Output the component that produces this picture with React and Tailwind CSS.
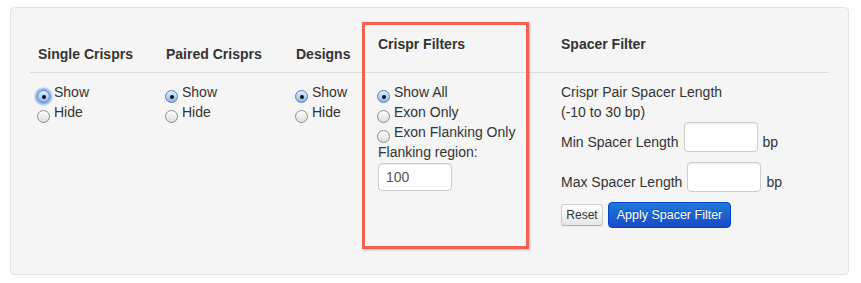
import { useState } from 'react'

function Radio({ checked, focused }) {
  return (
    <span
      className={`relative inline-flex w-[13px] h-[13px] shrink-0 mt-[8px] rounded-full items-center justify-center border ${
        checked
          ? 'border-[#4f7fc2] bg-gradient-to-b from-[#e2eefc] to-[#8cb6ea]'
          : 'border-[#8d8d8d] bg-gradient-to-b from-[#ffffff] to-[#dcdcdc]'
      } ${focused ? 'shadow-[0_0_2px_2px_rgba(90,150,230,0.75)]' : ''}`}
    >
      {checked && <span className="w-[4px] h-[4px] rounded-full bg-[#111]" />}
    </span>
  )
}

function Option({ label, checked, focused }) {
  return (
    <label className="flex items-start gap-[4px] h-[20px] -ml-[1px]">
      <Radio checked={checked} focused={focused} />
      <span>{label}</span>
    </label>
  )
}

function TextBox({ value, className }) {
  return (
    <input
      readOnly
      value={value}
      className={`bg-white border border-[#cccccc] rounded-[4px] shadow-[inset_0_1px_1px_rgba(0,0,0,0.075)] px-[7px] text-[14px] text-[#555] outline-none ${className}`}
    />
  )
}

export default function App() {
  const [min] = useState('')
  const [max] = useState('')

  return (
    <div className="w-[861px] h-[283px] bg-white pt-[7px] pl-[10px] text-[14px] text-[#333] font-['Liberation_Sans',Arial,sans-serif]">
      <div className="relative w-[839px] h-[268px] bg-[#f5f5f5] border border-[#e3e3e3] rounded-[4px] px-[19px]">
        <div className="grid grid-cols-[128px_130px_82px_183px_1fr]">
          {/* header row */}
          {['Single Crisprs', 'Paired Crisprs', 'Designs'].map((h) => (
            <div key={h} className="h-[65px] flex items-end px-[8px] pb-[8px] font-bold leading-[20px] border-b border-[#dddddd]">
              {h}
            </div>
          ))}
          <div className="h-[65px] flex items-end px-[8px] pb-[18px] font-bold leading-[20px] border-b border-[#dddddd]">
            Crispr Filters
          </div>
          <div className="h-[65px] flex items-end px-[8px] pb-[18px] font-bold leading-[20px] border-b border-[#dddddd]">
            Spacer Filter
          </div>

          {/* body row */}
          <div className="px-[8px] pt-[9px] leading-[20px]">
            <Option label="Show" checked focused />
            <Option label="Hide" />
          </div>
          <div className="px-[8px] pt-[9px] leading-[20px]">
            <Option label="Show" checked />
            <Option label="Hide" />
          </div>
          <div className="px-[8px] pt-[9px] leading-[20px]">
            <Option label="Show" checked />
            <Option label="Hide" />
          </div>
          <div className="px-[8px] pt-[9px] leading-[20px]">
            <Option label="Show All" checked />
            <Option label="Exon Only" />
            <Option label="Exon Flanking Only" />
            <div>Flanking region:</div>
            <TextBox value="100" className="w-[74px] h-[28px] mt-[1px]" />
          </div>
          <div className="px-[8px] pt-[9px] leading-[20px]">
            <div>Crispr Pair Spacer Length</div>
            <div>(-10 to 30 bp)</div>
            <div className="flex items-end gap-[5px]">
              <span>Min Spacer Length</span>
              <TextBox value={min} className="w-[74px] h-[30px]" />
              <span>bp</span>
            </div>
            <div className="flex items-end gap-[5px] mt-[10px]">
              <span>Max Spacer Length</span>
              <TextBox value={max} className="w-[74px] h-[30px]" />
              <span>bp</span>
            </div>
            <div className="flex items-center gap-[5px] mt-[10px]">
              <button className="h-[22px] w-[42px] text-[12px] leading-[20px] text-[#333] border border-[#cccccc] border-b-[#b3b3b3] rounded-[3px] bg-gradient-to-b from-[#ffffff] to-[#e6e6e6] shadow-[inset_0_1px_0_rgba(255,255,255,0.2),0_1px_2px_rgba(0,0,0,0.05)]">
                Reset
              </button>
              <button className="h-[26px] w-[123px] text-[12.5px] leading-[20px] text-white border border-[#0044cc] rounded-[4px] bg-gradient-to-b from-[#1f7ad8] to-[#1b48c6] [text-shadow:0_-1px_0_rgba(0,0,0,0.25)]">
                Apply Spacer Filter
              </button>
            </div>
          </div>
        </div>

        {/* highlight box drawn over the Crispr Filters column */}
        <div className="absolute left-[351px] top-[14px] w-[167px] h-[227px] border-[3px] border-[#f4614e] shadow-[1px_1px_2px_rgba(0,0,0,0.25)] pointer-events-none" />
      </div>
    </div>
  )
}
